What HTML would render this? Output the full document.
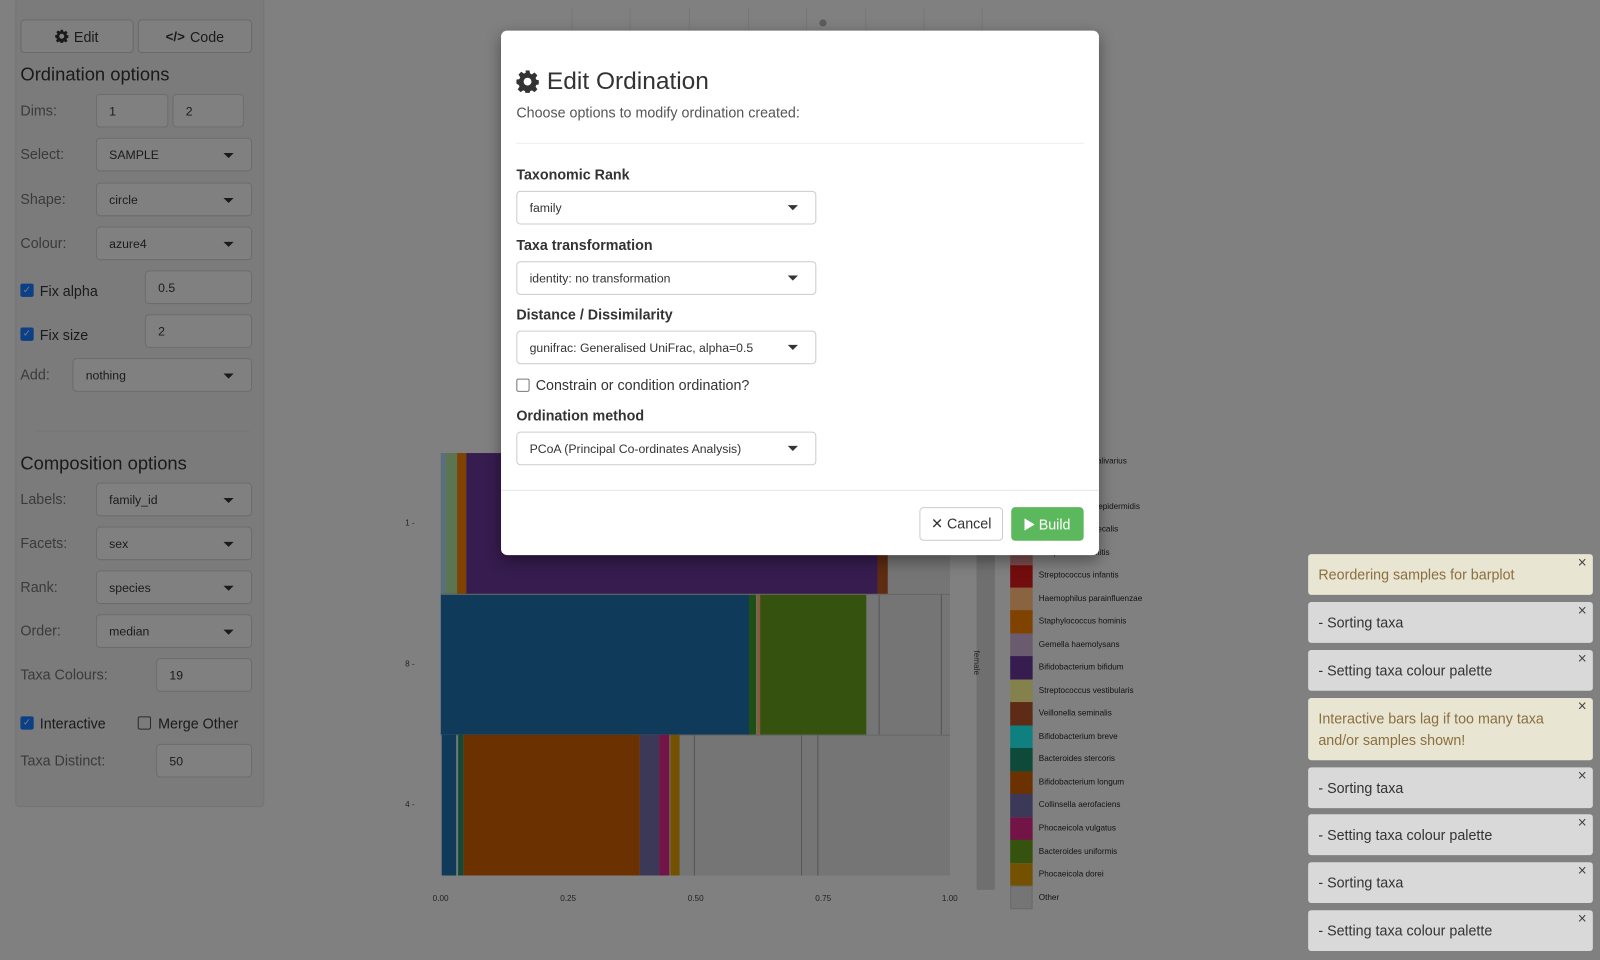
<!DOCTYPE html>
<html><head><meta charset="utf-8"><style>
*{box-sizing:border-box;margin:0;padding:0}
html,body{width:1600px;height:960px;overflow:hidden;background:#808080;font-family:"Liberation Sans",Arial,sans-serif}
#w{position:absolute;left:0;top:0;width:1568px;height:941px;transform:scale(1.0204);transform-origin:0 0}
.a{position:absolute}
.panel{left:15px;top:-2px;width:244px;height:793px;background:#7b7b7b;border:1px solid #747474;border-radius:4px}
.btn{position:absolute;height:33px;border:1px solid #6a6a6a;border-radius:4px;background:#7f7f7f;color:#1a1a1a;font-size:14px;display:flex;align-items:center;justify-content:center;gap:5px}
.h{position:absolute;font-size:18px;color:#1a1a1a;font-weight:500}
.lbl{position:absolute;font-size:14px;color:#3a3a3a}
.inp{position:absolute;height:33px;border:1px solid #6c6c6c;border-radius:4px;background:#808080;font-size:12px;color:#1a1a1a;padding:0 12px;display:flex;align-items:center}
.inp.s::after{content:"";position:absolute;right:17px;top:14px;border-left:5px solid transparent;border-right:5px solid transparent;border-top:5px solid #1a1a1a}
.cb{position:absolute;width:13px;height:13px;border-radius:2px;background:#0b3f86;color:#7b7b7b;font-size:10px;line-height:13px;text-align:center}
.cbo{position:absolute;width:13px;height:13px;border-radius:2px;border:1px solid #2a2a2a}
.bar{position:absolute}
.lg{position:absolute;left:990px;width:22px;height:22.5px}
.lt{position:absolute;left:1018px;font-size:8px;color:#111}
.tick{position:absolute;font-size:8px;color:#222}
.modal{left:491px;top:30px;width:586px;height:514px;background:#fff;border-radius:6px;box-shadow:0 5px 15px rgba(0,0,0,.4)}
.ml{position:absolute;font-size:14px;font-weight:bold;color:#333;left:15px}
.ms{position:absolute;left:15px;width:294px;height:33px;border:1px solid #ccc;border-radius:4px;font-size:12px;color:#333;padding:0 12px;display:flex;align-items:center}
.ms::after{content:"";position:absolute;right:17px;top:13px;border-left:5px solid transparent;border-right:5px solid transparent;border-top:5px solid #333}
.t{position:absolute;left:1282px;width:279px;border-radius:3px;font-size:14px;padding:0 10px;line-height:21px;display:flex;align-items:center}
.t.g{background:#d9d9d9;color:#333}
.t.y{background:#e8e5d3;color:#8b6f3f}
.t::after{content:"×";position:absolute;right:6px;top:2px;font-size:15px;color:#444;line-height:14px}
</style></head><body><div id="w">

<!-- top faint grid -->
<div class="a" style="left:560px;top:8px;width:1px;height:22px;background:#777"></div>
<div class="a" style="left:617px;top:8px;width:1px;height:22px;background:#777"></div>
<div class="a" style="left:675px;top:8px;width:1px;height:22px;background:#777"></div>
<div class="a" style="left:733px;top:8px;width:1px;height:22px;background:#777"></div>
<div class="a" style="left:790px;top:8px;width:1px;height:22px;background:#777"></div>
<div class="a" style="left:848px;top:8px;width:1px;height:22px;background:#777"></div>
<div class="a" style="left:905px;top:8px;width:1px;height:22px;background:#777"></div>
<div class="a" style="left:962px;top:8px;width:1px;height:22px;background:#777"></div>
<div class="a" style="left:803px;top:19px;width:7px;height:7px;border-radius:50%;background:#5c5c5c"></div>

<!-- left panel -->
<div class="a panel"></div>
<div class="btn" style="left:20px;top:19px;width:111px"><svg width="13" height="13" viewBox="0 0 16 16"><path fill="#1a1a1a" d="M6.6 0h2.8l.4 2.2 1.3.6 1.9-1.3 2 2-1.3 1.9.6 1.3 2.2.4v2.8l-2.2.4-.6 1.3 1.3 1.9-2 2-1.9-1.3-1.3.6-.4 2.2H6.6l-.4-2.2-1.3-.6-1.9 1.3-2-2 1.3-1.9-.6-1.3L0 9.4V6.6l2.2-.4.6-1.3L1.5 3l2-2 1.9 1.3 1.3-.6zM8 5a3 3 0 100 6 3 3 0 000-6z"/></svg>Edit</div>
<div class="btn" style="left:135px;top:19px;width:112px"><span style="font-size:13px;font-weight:bold">&lt;/&gt;</span>Code</div>
<div class="h" style="left:20px;top:63px">Ordination options</div>
<div class="lbl" style="left:20px;top:100px">Dims:</div>
<div class="inp" style="left:94px;top:92px;width:71px">1</div>
<div class="inp" style="left:169px;top:92px;width:70px">2</div>
<div class="lbl" style="left:20px;top:143px">Select:</div>
<div class="inp s" style="left:94px;top:135px;width:153px">SAMPLE</div>
<div class="lbl" style="left:20px;top:187px">Shape:</div>
<div class="inp s" style="left:94px;top:179px;width:153px">circle</div>
<div class="lbl" style="left:20px;top:230px">Colour:</div>
<div class="inp s" style="left:94px;top:222px;width:153px">azure4</div>
<div class="cb" style="left:20px;top:278px">✓</div>
<div class="lbl" style="left:39px;top:277px;color:#1a1a1a">Fix alpha</div>
<div class="inp" style="left:142px;top:265px;width:105px">0.5</div>
<div class="cb" style="left:20px;top:321px">✓</div>
<div class="lbl" style="left:39px;top:320px;color:#1a1a1a">Fix size</div>
<div class="inp" style="left:142px;top:308px;width:105px">2</div>
<div class="lbl" style="left:20px;top:359px">Add:</div>
<div class="inp s" style="left:71px;top:351px;width:176px">nothing</div>
<div class="a" style="left:35px;top:422px;width:210px;height:1px;background:#777"></div>
<div class="h" style="left:20px;top:444px">Composition options</div>
<div class="lbl" style="left:20px;top:481px">Labels:</div>
<div class="inp s" style="left:94px;top:473px;width:153px">family_id</div>
<div class="lbl" style="left:20px;top:524px">Facets:</div>
<div class="inp s" style="left:94px;top:516px;width:153px">sex</div>
<div class="lbl" style="left:20px;top:567px">Rank:</div>
<div class="inp s" style="left:94px;top:559px;width:153px">species</div>
<div class="lbl" style="left:20px;top:610px">Order:</div>
<div class="inp s" style="left:94px;top:602px;width:153px">median</div>
<div class="lbl" style="left:20px;top:653px">Taxa Colours:</div>
<div class="inp" style="left:153px;top:645px;width:94px">19</div>
<div class="cb" style="left:20px;top:702px">✓</div>
<div class="lbl" style="left:39px;top:701px;color:#1a1a1a">Interactive</div>
<div class="cbo" style="left:135px;top:702px"></div>
<div class="lbl" style="left:155px;top:701px;color:#1a1a1a">Merge Other</div>
<div class="lbl" style="left:20px;top:737px">Taxa Distinct:</div>
<div class="inp" style="left:153px;top:729px;width:94px">50</div>

<!-- chart -->
<div class="bar" style="left:432px;top:444px;width:499px;height:414px;background:#757575"></div>
<div class="bar" style="left:432px;top:444px;width:5px;height:138px;background:#5a6e7e"></div>
<div class="bar" style="left:437px;top:444px;width:11px;height:138px;background:#5a7550"></div>
<div class="bar" style="left:448px;top:444px;width:9px;height:138px;background:#7f4200"></div>
<div class="bar" style="left:457px;top:444px;width:403px;height:138px;background:#361c4f"></div>
<div class="bar" style="left:860px;top:444px;width:10px;height:138px;background:#5e2c10"></div>
<div class="bar" style="left:432px;top:582px;width:302px;height:138px;background:#0f3a5a"></div>
<div class="bar" style="left:734px;top:582px;width:7px;height:138px;background:#1e5016"></div>
<div class="bar" style="left:742px;top:582px;width:3px;height:138px;background:#8a5a3a"></div>
<div class="bar" style="left:745px;top:582px;width:104px;height:138px;background:#36520f"></div>
<div class="bar" style="left:861px;top:582px;width:1px;height:138px;background:#555"></div>
<div class="bar" style="left:922px;top:582px;width:1px;height:138px;background:#555"></div>
<div class="bar" style="left:432px;top:582px;width:499px;height:1px;background:#666"></div>
<div class="bar" style="left:432px;top:720px;width:499px;height:1px;background:#666"></div>
<div class="bar" style="left:433px;top:720px;width:14px;height:138px;background:#0f3a5a"></div>
<div class="bar" style="left:449px;top:720px;width:5px;height:138px;background:#0e4a3a"></div>
<div class="bar" style="left:454px;top:720px;width:173px;height:138px;background:#6b3100"></div>
<div class="bar" style="left:627px;top:720px;width:19px;height:138px;background:#3c3858"></div>
<div class="bar" style="left:646px;top:720px;width:10px;height:138px;background:#731446"></div>
<div class="bar" style="left:657px;top:720px;width:9px;height:138px;background:#725200"></div>
<div class="bar" style="left:680px;top:720px;width:1px;height:138px;background:#555"></div>
<div class="bar" style="left:785px;top:720px;width:1px;height:138px;background:#555"></div>
<div class="bar" style="left:801px;top:720px;width:1px;height:138px;background:#555"></div>
<div class="tick" style="left:397px;top:508px">1 -</div>
<div class="tick" style="left:397px;top:646px">8 -</div>
<div class="tick" style="left:397px;top:784px">4 -</div>
<div class="tick" style="left:424px;top:876px">0.00</div>
<div class="tick" style="left:549px;top:876px">0.25</div>
<div class="tick" style="left:674px;top:876px">0.50</div>
<div class="tick" style="left:799px;top:876px">0.75</div>
<div class="tick" style="left:923px;top:876px">1.00</div>
<div class="a" style="left:957px;top:444px;width:18px;height:428px;background:#6f6f6f"></div>
<div class="tick" style="left:945px;top:645px;transform:rotate(90deg);font-size:8px">female</div>

<!-- legend -->
<div class="lg" style="top:553px;background:#720d0d"></div><div class="lt" style="top:559px">Streptococcus infantis</div>
<div class="lg" style="top:576px;background:#8a6340"></div><div class="lt" style="top:582px">Haemophilus parainfluenzae</div>
<div class="lg" style="top:598px;background:#7f4200"></div><div class="lt" style="top:604px">Staphylococcus hominis</div>
<div class="lg" style="top:621px;background:#6a5b6e"></div><div class="lt" style="top:627px">Gemella haemolysans</div>
<div class="lg" style="top:643px;background:#361c4f"></div><div class="lt" style="top:649px">Bifidobacterium bifidum</div>
<div class="lg" style="top:666px;background:#84814c"></div><div class="lt" style="top:672px">Streptococcus vestibularis</div>
<div class="lg" style="top:688px;background:#5e2c16"></div><div class="lt" style="top:694px">Veillonella seminalis</div>
<div class="lg" style="top:711px;background:#107f7f"></div><div class="lt" style="top:717px">Bifidobacterium breve</div>
<div class="lg" style="top:733px;background:#0e4a3a"></div><div class="lt" style="top:739px">Bacteroides stercoris</div>
<div class="lg" style="top:756px;background:#6b3100"></div><div class="lt" style="top:762px">Bifidobacterium longum</div>
<div class="lg" style="top:778px;background:#3c3858"></div><div class="lt" style="top:784px">Collinsella aerofaciens</div>
<div class="lg" style="top:801px;background:#731446"></div><div class="lt" style="top:807px">Phocaeicola vulgatus</div>
<div class="lg" style="top:823px;background:#36520f"></div><div class="lt" style="top:830px">Bacteroides uniformis</div>
<div class="lg" style="top:846px;background:#725200"></div><div class="lt" style="top:852px">Phocaeicola dorei</div>
<div class="lg" style="top:868px;background:#757575;border:1px solid #6a6a6a"></div><div class="lt" style="top:875px">Other</div>
<div class="lg" style="top:531px;background:#7a4d4d"></div><div class="lt" style="top:537px">Streptococcus mitis</div>
<div class="lt" style="top:447px">Streptococcus salivarius</div>
<div class="lt" style="top:492px">Staphylococcus epidermidis</div>
<div class="lt" style="top:514px">Enterococcus faecalis</div>

<!-- modal -->
<div class="a modal">
 <div class="a" style="left:15px;top:36px;display:flex;align-items:center;gap:8px;font-size:24px;color:#333">
  <svg width="22" height="22" viewBox="0 0 16 16"><path fill="#333" d="M6.6 0h2.8l.4 2.2 1.3.6 1.9-1.3 2 2-1.3 1.9.6 1.3 2.2.4v2.8l-2.2.4-.6 1.3 1.3 1.9-2 2-1.9-1.3-1.3.6-.4 2.2H6.6l-.4-2.2-1.3-.6-1.9 1.3-2-2 1.3-1.9-.6-1.3L0 9.4V6.6l2.2-.4.6-1.3L1.5 3l2-2 1.9 1.3 1.3-.6zM8 5.2a2.8 2.8 0 100 5.6 2.8 2.8 0 000-5.6z"/></svg>Edit Ordination</div>
 <div class="a" style="left:15px;top:72px;font-size:14px;color:#555">Choose options to modify ordination created:</div>
 <div class="a" style="left:15px;top:110px;width:556px;height:1px;background:#eee"></div>
 <div class="ml" style="top:133px">Taxonomic Rank</div>
 <div class="ms" style="top:157px">family</div>
 <div class="ml" style="top:202px">Taxa transformation</div>
 <div class="ms" style="top:226px">identity: no transformation</div>
 <div class="ml" style="top:270px">Distance / Dissimilarity</div>
 <div class="ms" style="top:294px">gunifrac: Generalised UniFrac, alpha=0.5</div>
 <div class="a" style="left:15px;top:341px;width:13px;height:13px;border:1px solid #777;border-radius:2px"></div>
 <div class="a" style="left:34px;top:339px;font-size:14px;color:#333">Constrain or condition ordination?</div>
 <div class="ml" style="top:369px">Ordination method</div>
 <div class="ms" style="top:393px">PCoA (Principal Co-ordinates Analysis)</div>
 <div class="a" style="left:0;top:450px;width:586px;height:1px;background:#e5e5e5"></div>
 <div class="a" style="left:410px;top:467px;width:82px;height:33px;border:1px solid #ccc;border-radius:4px;font-size:14px;color:#333;display:flex;align-items:center;justify-content:center">✕&nbsp;Cancel</div>
 <div class="a" style="left:500px;top:467px;width:71px;height:33px;border-radius:4px;background:#5cb85c;color:#fff;font-size:14px;display:flex;align-items:center;justify-content:center"><svg width="10" height="12" viewBox="0 0 10 12" style="margin-right:4px"><path fill="#fff" d="M0 0L10 6 0 12z"/></svg>Build</div>
</div>

<!-- toasts -->
<div class="t y" style="top:543px;height:40px">Reordering samples for barplot</div>
<div class="t g" style="top:590px;height:40px">- Sorting taxa</div>
<div class="t g" style="top:637px;height:40px">- Setting taxa colour palette</div>
<div class="t y" style="top:684px;height:61px">Interactive bars lag if too many taxa<br>and/or samples shown!</div>
<div class="t g" style="top:752px;height:40px">- Sorting taxa</div>
<div class="t g" style="top:798px;height:40px">- Setting taxa colour palette</div>
<div class="t g" style="top:845px;height:40px">- Sorting taxa</div>
<div class="t g" style="top:892px;height:40px">- Setting taxa colour palette</div>
</div></body></html>
